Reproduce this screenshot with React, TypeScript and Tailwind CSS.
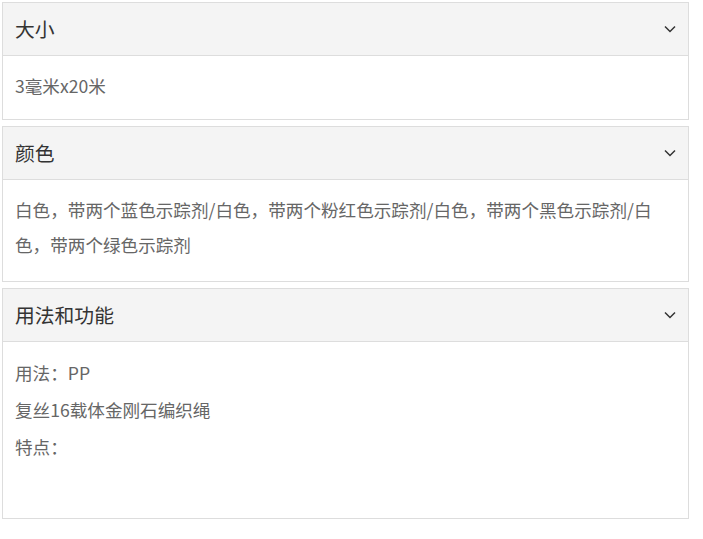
import React from "react";

const font = { fontFamily: '"Noto Sans CJK SC", "Noto Sans", sans-serif' };

function Chevron() {
  return (
    <svg width="12" height="8" viewBox="0 0 12 8" className="shrink-0">
      <path d="M1 1.5 L6 6.5 L11 1.5" fill="none" stroke="#333" strokeWidth="1.5" />
    </svg>
  );
}

function Card({ title, children }: { title: string; children: React.ReactNode }) {
  return (
    <div className="border border-[#dddddd] bg-white">
      <div className="h-[53px] bg-[#f4f4f4] border-b border-[#dddddd] flex items-center justify-between pl-[12px] pr-[12px]">
        <span className="text-[19.8px] text-[#333333]">{title}</span>
        <Chevron />
      </div>
      {children}
    </div>
  );
}

export default function App() {
  return (
    <div className="w-[703px] h-[539px] bg-white pt-[2px] pl-[2px]" style={font}>
      <div className="w-[687px] flex flex-col gap-[6px]">
        <Card title="大小">
          <div className="pl-[12px] pr-[30px] pt-[12px] pb-[16px] text-[17.6px] leading-[35px] text-[#666666]">3毫米x20米</div>
        </Card>
        <Card title="颜色">
          <div className="pl-[12px] pr-[30px] pt-[12px] pb-[19px] text-[17.6px] leading-[35px] text-[#666666]">
            白色，带两个蓝色示踪剂/白色，带两个粉红色示踪剂/白色，带两个黑色示踪剂/白色，带两个绿色示踪剂
          </div>
        </Card>
        <Card title="用法和功能">
          <div className="pl-[12px] pr-[30px] pt-[12px] pb-[16px] text-[17.6px] leading-[37px] text-[#666666]">
            <div>用法：PP</div>
            <div>复丝16载体金刚石编织绳</div>
            <div>特点：</div>
            <div>&nbsp;</div>
          </div>
        </Card>
      </div>
    </div>
  );
}
